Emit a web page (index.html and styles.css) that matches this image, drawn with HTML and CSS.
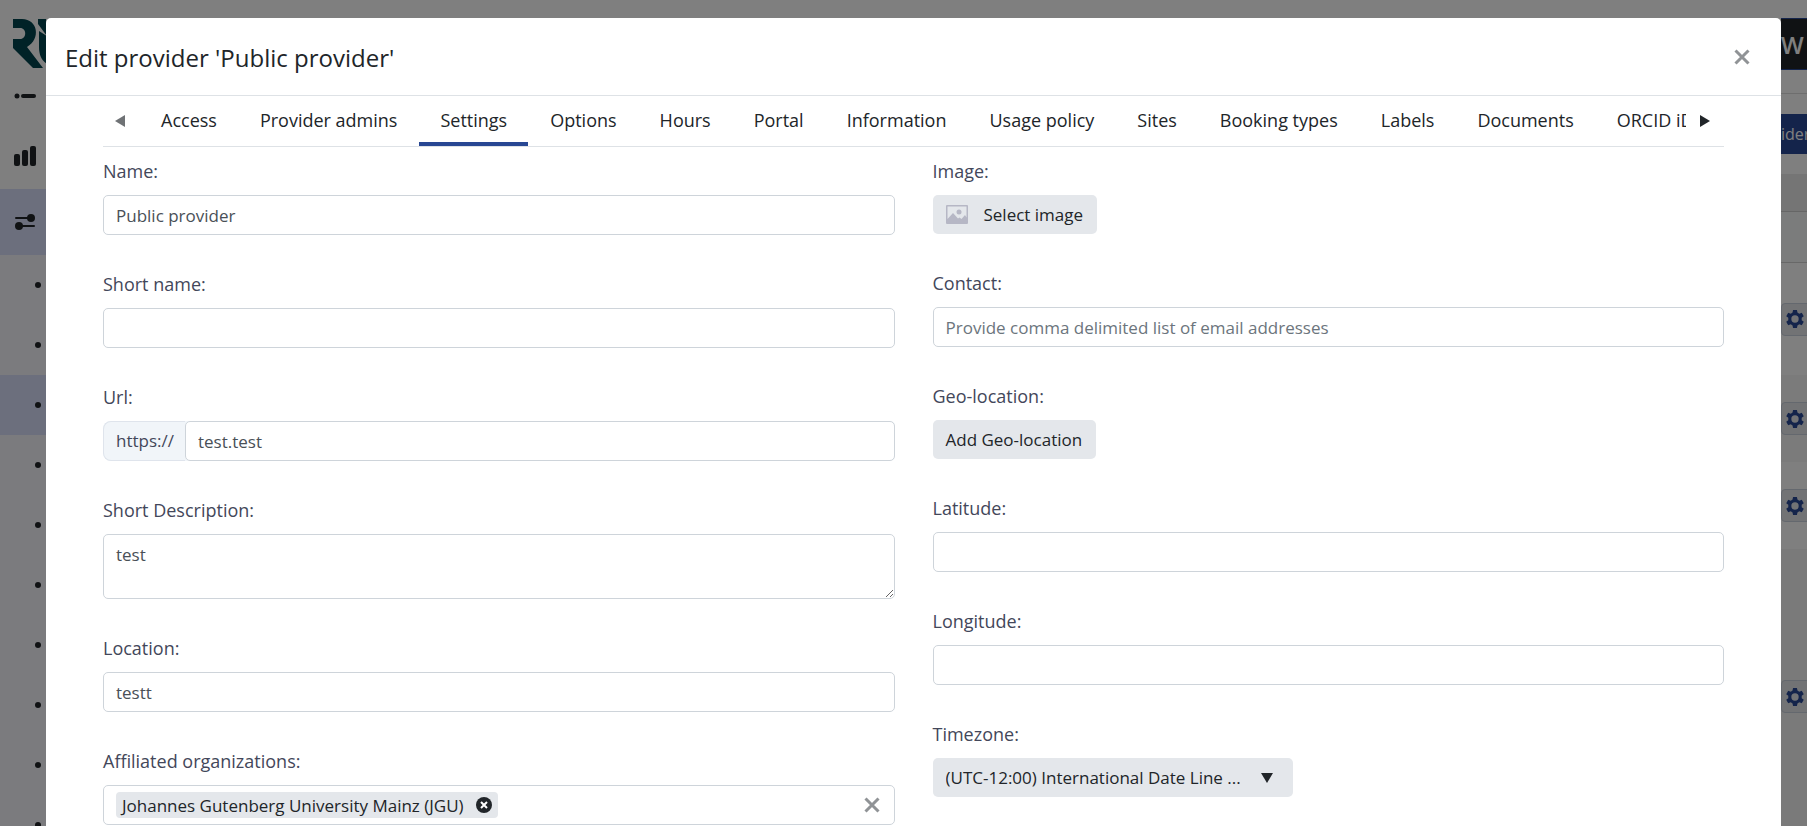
FILE: index.html
```
<!DOCTYPE html>
<html lang="en">
<head>
    <meta charset="UTF-8">
    <title>Edit provider</title>
    <link rel="stylesheet" href="styles.css">
</head>
<body>
    <svg class="sprite">
        <symbol id="gear" viewBox="1 1 22 22">
            <path fill-rule="evenodd" d="M9.600 1h4.800l.6 3.200 2.200 1.300 3.100-1.200 2.400 4.200-2.500 2.100v2.800l2.500 2.100-2.400 4.200-3.100-1.200-2.200 1.300-.6 3.200H9.600l-.6-3.200-2.200-1.300-3.100 1.200-2.400-4.200 2.500-2.100v-2.800L1.300 8.500l2.400-4.200 3.100 1.200L9 4.200zM12 7.500a4.500 4.500 0 1 0 0 9 4.500 4.500 0 0 0 0-9z"/>
        </symbol>
    </svg>

    <div class="page">
        <nav class="sidebar">
            <div class="logo">
                <svg width="46" height="49" viewBox="0 0 46 49">
                    <path d="M0 0H9C25 0 28 20 14 28L30 49H20L0 29V20H7C14 20 14 9 7 9H0Z"/>
                    <path d="M25 0H34V8L46 20V49C32 47 26 40 26 28V12L34 17 25 5Z"/>
                </svg>
            </div>
            <div class="side-item">
                <svg width="22" height="6" viewBox="0 0 22 6"><circle cx="3" cy="3" r="2.500"/><rect x="7" y="1" width="15" height="4" rx="2"/></svg>
            </div>
            <div class="side-item">
                <svg width="22" height="20" viewBox="0 0 22 20"><rect y="8" width="6" height="12" rx="2"/><rect x="8" y="4" width="6" height="16" rx="2"/><rect x="16" width="6" height="20" rx="2"/></svg>
            </div>
            <div class="side-item side-active">
                <svg width="22" height="16" viewBox="-1 0 22 16"><rect y="3" width="18" height="2" rx="1"/><circle cx="16" cy="4" r="4"/><rect x="2" y="11" width="18" height="2" rx="1"/><circle cx="4" cy="12" r="4"/></svg>
            </div>
            <ul class="side-list">
                <li></li>
                <li></li>
                <li class="side-active"></li>
                <li></li>
                <li></li>
                <li></li>
                <li></li>
                <li></li>
                <li></li>
                <li></li>
            </ul>
        </nav>
        <div class="page-right">
            <div class="user-badge">W</div>
            <div class="toolbar"><button class="add-button">ider</button></div>
            <div class="row-head"></div>
            <div class="row-filter"></div>
            <div class="row row-tall"><button class="gear-button" aria-label="Options"><svg width="18" height="18"><use href="#gear"/></svg></button></div>
            <div class="row row-odd"><button class="gear-button" aria-label="Options"><svg width="18" height="18"><use href="#gear"/></svg></button></div>
            <div class="row"><button class="gear-button" aria-label="Options"><svg width="18" height="18"><use href="#gear"/></svg></button></div>
            <div class="row row-last"><button class="gear-button" aria-label="Options"><svg width="18" height="18"><use href="#gear"/></svg></button></div>
        </div>
    </div>

    <div class="overlay">
        <div class="modal" role="dialog" aria-labelledby="modal-title">
            <header class="modal-header">
                <h1 id="modal-title">Edit provider 'Public provider'</h1>
                <button class="close" aria-label="Close">
                    <svg width="16" height="16" viewBox="0 0 16 16"><path d="M1.500 1.500l13 13M14.500 1.500l-13 13"/></svg>
                </button>
            </header>
            <div class="modal-body">
                <div class="tabs">
                    <button class="tab-arrow tab-prev" aria-label="Previous tabs"><svg width="10" height="12" viewBox="0 0 10 12"><path d="M10 0v12L0 6z"/></svg></button>
                    <nav class="tab-list">
                        <a href="#">Access</a>
                        <a href="#">Provider admins</a>
                        <a href="#" class="active">Settings</a>
                        <a href="#">Options</a>
                        <a href="#">Hours</a>
                        <a href="#">Portal</a>
                        <a href="#">Information</a>
                        <a href="#">Usage policy</a>
                        <a href="#">Sites</a>
                        <a href="#">Booking types</a>
                        <a href="#">Labels</a>
                        <a href="#">Documents</a>
                        <a href="#">ORCID iD</a>
                    </nav>
                    <button class="tab-arrow" aria-label="Next tabs"><svg width="10" height="12" viewBox="0 0 10 12"><path d="M0 0v12l10-6z"/></svg></button>
                </div>

                <form class="form">
                    <div class="column">
                        <div class="field">
                            <label for="name">Name:</label>
                            <input type="text" id="name" value="Public provider">
                        </div>
                        <div class="field">
                            <label for="short-name">Short name:</label>
                            <input type="text" id="short-name">
                        </div>
                        <div class="field">
                            <label for="url">Url:</label>
                            <div class="input-group">
                                <span class="prefix">https://</span>
                                <input type="text" id="url" value="test.test">
                            </div>
                        </div>
                        <div class="field">
                            <label for="description">Short Description:</label>
                            <textarea id="description">test</textarea>
                        </div>
                        <div class="field">
                            <label for="location">Location:</label>
                            <input type="text" id="location" value="testt">
                        </div>
                        <div class="field">
                            <label for="organizations">Affiliated organizations:</label>
                            <div class="tag-box">
                                <span class="tag">Johannes Gutenberg University Mainz (JGU)
                                    <button type="button" class="tag-remove" aria-label="Remove">
                                        <svg width="16" height="16" viewBox="0 0 16 16"><circle cx="8" cy="8" r="8"/><path d="M5 5l6 6M11 5l-6 6"/></svg>
                                    </button>
                                </span>
                                <input type="text" id="organizations">
                                <button type="button" class="close" aria-label="Clear">
                                    <svg width="16" height="16" viewBox="0 0 16 16"><path d="M1.500 1.500l13 13M14.500 1.500l-13 13"/></svg>
                                </button>
                            </div>
                        </div>
                    </div>
                    <div class="column">
                        <div class="field">
                            <label for="image">Image:</label>
                            <button type="button" class="btn" id="image">
                                <svg width="22" height="19" viewBox="0 0 22 19"><path fill-rule="evenodd" d="M1 0h20a1 1 0 0 1 1 1v17a1 1 0 0 1-1 1H1a1 1 0 0 1-1-1V1a1 1 0 0 1 1-1zM1.500 1.500V14L7 8l5 5.500 1.500-1 2 1.500 3.500-4 1.500 2.500v-11z"/><circle cx="13" cy="7" r="2.500"/></svg>
                                Select image
                            </button>
                        </div>
                        <div class="field">
                            <label for="contact">Contact:</label>
                            <input type="text" id="contact" placeholder="Provide comma delimited list of email addresses">
                        </div>
                        <div class="field">
                            <label for="geo">Geo-location:</label>
                            <button type="button" class="btn" id="geo">Add Geo-location</button>
                        </div>
                        <div class="field">
                            <label for="latitude">Latitude:</label>
                            <input type="text" id="latitude">
                        </div>
                        <div class="field">
                            <label for="longitude">Longitude:</label>
                            <input type="text" id="longitude">
                        </div>
                        <div class="field">
                            <label for="timezone">Timezone:</label>
                            <div class="select-wrap">
                                <select id="timezone">
                                    <option>(UTC-12:00) International Date Line ...</option>
                                </select>
                                <svg width="12" height="10" viewBox="0 0 12 10"><path d="M0 0h12L6 10z"/></svg>
                            </div>
                        </div>
                    </div>
                </form>
            </div>
        </div>
    </div>
</body>
</html>
```

FILE: styles.css
```
* {
    box-sizing: border-box;
}
body {
    margin: 0;
    height: 100vh;
    overflow: hidden;
    background-color: #ffffff;
    color: #212529;
    font-family: "Open Sans", "Noto Sans", sans-serif;
    font-size: 17px;
}
button, input, select, textarea {
    font: inherit;
    color: inherit;
}
button {
    padding: 0;
    border: none;
    background: none;
    cursor: pointer;
}
svg {
    display: block;
    flex-shrink: 0;
}
.sprite {
    position: absolute;
    width: 0;
    height: 0;
}

/* page behind the dialog */
.page {
    display: flex;
    justify-content: space-between;
    height: 100vh;
    overflow: hidden;
}
.sidebar {
    width: 46px;
    overflow: hidden;
    fill: #212529;
}
.logo {
    height: 69px;
    padding: 19px 0 0 13px;
    fill: #00444f;
}
.side-item {
    display: flex;
    align-items: center;
    height: 66px;
    padding-left: 14px;
}
.logo + .side-item {
    height: 54px;
}
.side-active {
    background-color: #d8dffa;
}
.side-list {
    margin: 0;
    padding: 0;
    list-style: none;
    background-color: #f6f7fd;
}
.side-list li {
    display: flex;
    align-items: center;
    justify-content: flex-end;
    height: 60px;
    padding-right: 5px;
}
.side-list li::before {
    content: "";
    width: 6px;
    height: 6px;
    border-radius: 50%;
    background-color: #212529;
}
.page-right {
    display: flex;
    flex-direction: column;
    width: 26px;
    padding-top: 18px;
    overflow: hidden;
}
.user-badge {
    height: 52px;
    border: 1px solid #294896;
    border-width: 1px 0;
    background-color: #212529;
    color: #ffffff;
    font-size: 24px;
    font-weight: 600;
    line-height: 52px;
}
.toolbar {
    margin-top: 23px;
    padding: 20px 0;
    border-top: 1px solid #dddddd;
}
.add-button {
    display: block;
    width: 100%;
    height: 40px;
    background-color: #294896;
    color: #ffffff;
    font-size: 16px;
    text-align: left;
}
.row-head {
    height: 38px;
    border-bottom: 1px solid #cccccc;
    background-color: #ebebeb;
}
.row-filter {
    height: 51px;
    border-bottom: 1px solid #d0d0d0;
    background-color: #f7f9f8;
}
.row {
    display: flex;
    align-items: center;
    height: 87px;
}
.row-tall {
    height: 112px;
}
.row-odd {
    background-color: #f7f7f7;
}
.row-last {
    flex: 1;
    align-items: flex-start;
    padding-top: 131px;
    background-color: #f4f4f4;
}
.gear-button {
    width: 40px;
    height: 33px;
    flex-shrink: 0;
    padding-left: 4px;
    border: 1px solid #c9d0dc;
    border-radius: 4px;
    background-color: #e4e7eb;
    fill: #294896;
}

/* dialog */
.overlay {
    position: fixed;
    inset: 0;
    padding: 18px 26px 0 46px;
    background-color: rgba(0, 0, 0, 0.5);
}
.modal {
    min-height: 100%;
    border-radius: 5px 5px 0 0;
    background-color: #ffffff;
}
.modal-header {
    display: flex;
    align-items: center;
    justify-content: space-between;
    height: 78px;
    padding: 0 31px 0 19px;
    border-bottom: 1px solid #dee2e6;
}
.modal-header h1 {
    margin: 0;
    padding-top: 2px;
    font-size: 24px;
    font-weight: 400;
}
.close {
    stroke: #909396;
    stroke-width: 3;
}
.modal-body {
    padding: 0 57px;
}
.tabs {
    display: flex;
    height: 51px;
    border-bottom: 1px solid #dee2e6;
    font-size: 18px;
}
.tab-arrow {
    width: 38px;
    padding-left: 14px;
    fill: #212529;
}
.tab-prev {
    width: 37px;
    padding-left: 12px;
    fill: #6f7275;
}
.tab-list {
    display: flex;
    flex: 1;
    gap: 1px;
    overflow: hidden;
}
.tab-list a {
    flex-shrink: 0;
    padding: 3px 21px 0;
    border-bottom: 4px solid transparent;
    color: inherit;
    line-height: 43px;
    text-decoration: none;
    white-space: nowrap;
}
.tab-list .active {
    border-bottom-color: #284793;
}
.form {
    display: grid;
    grid-template-columns: 1fr 1fr;
    gap: 38px;
    padding-top: 11px;
}
.column {
    display: flex;
    flex-direction: column;
    gap: 36px;
}
.field {
    display: flex;
    flex-direction: column;
    align-items: flex-start;
    gap: 10px;
    color: #495057;
}
.field label {
    color: #43475a;
    font-size: 18px;
    line-height: 27px;
}
.field input, .field textarea, .tag-box {
    width: 100%;
    height: 40px;
    padding: 0 12px;
    border: 1px solid #ced4da;
    border-radius: 5px;
    background-color: #ffffff;
}
.field textarea {
    display: block;
    height: 65px;
    padding: 8px 12px;
}
.field input::placeholder {
    color: #6c757d;
}
.input-group {
    display: flex;
    width: 100%;
    border-radius: 8px 5px 5px 8px;
    background-color: #f1f5f9;
}
.prefix {
    padding: 0 11px 0 12px;
    border: 1px solid #dfe4ec;
    border-right: none;
    border-radius: 8px 0 0 8px;
    line-height: 38px;
    color: #43475a;
}
.tag-box {
    display: flex;
    align-items: center;
    justify-content: space-between;
    padding-right: 14px;
}
.tag {
    display: flex;
    align-items: center;
    gap: 12px;
    height: 26px;
    padding: 0 6px;
    border-radius: 4px;
    background-color: #e4e7eb;
    color: #212529;
    white-space: nowrap;
}
.tag-remove {
    fill: #212529;
    stroke: #ffffff;
    stroke-width: 2;
}
.tag-remove circle {
    stroke: none;
}
.tag-box input {
    flex: 1;
    width: auto;
    height: 30px;
    border: none;
}
.btn {
    display: flex;
    align-items: center;
    gap: 16px;
    height: 39px;
    padding: 0 14px 0 13px;
    border-radius: 5px;
    background-color: #e4e7eb;
    color: #212529;
}
.btn svg {
    fill: #b6b7c5;
}
.select-wrap {
    display: grid;
    align-items: center;
    width: 360px;
}
.select-wrap select, .select-wrap svg {
    grid-area: 1 / 1;
}
.select-wrap select {
    appearance: none;
    width: 100%;
    height: 39px;
    padding: 0 13px;
    border: none;
    border-radius: 5px;
    background-color: #e4e7eb;
    color: #212529;
}
.select-wrap svg {
    justify-self: end;
    margin-right: 20px;
    fill: #212529;
    pointer-events: none;
}
```
